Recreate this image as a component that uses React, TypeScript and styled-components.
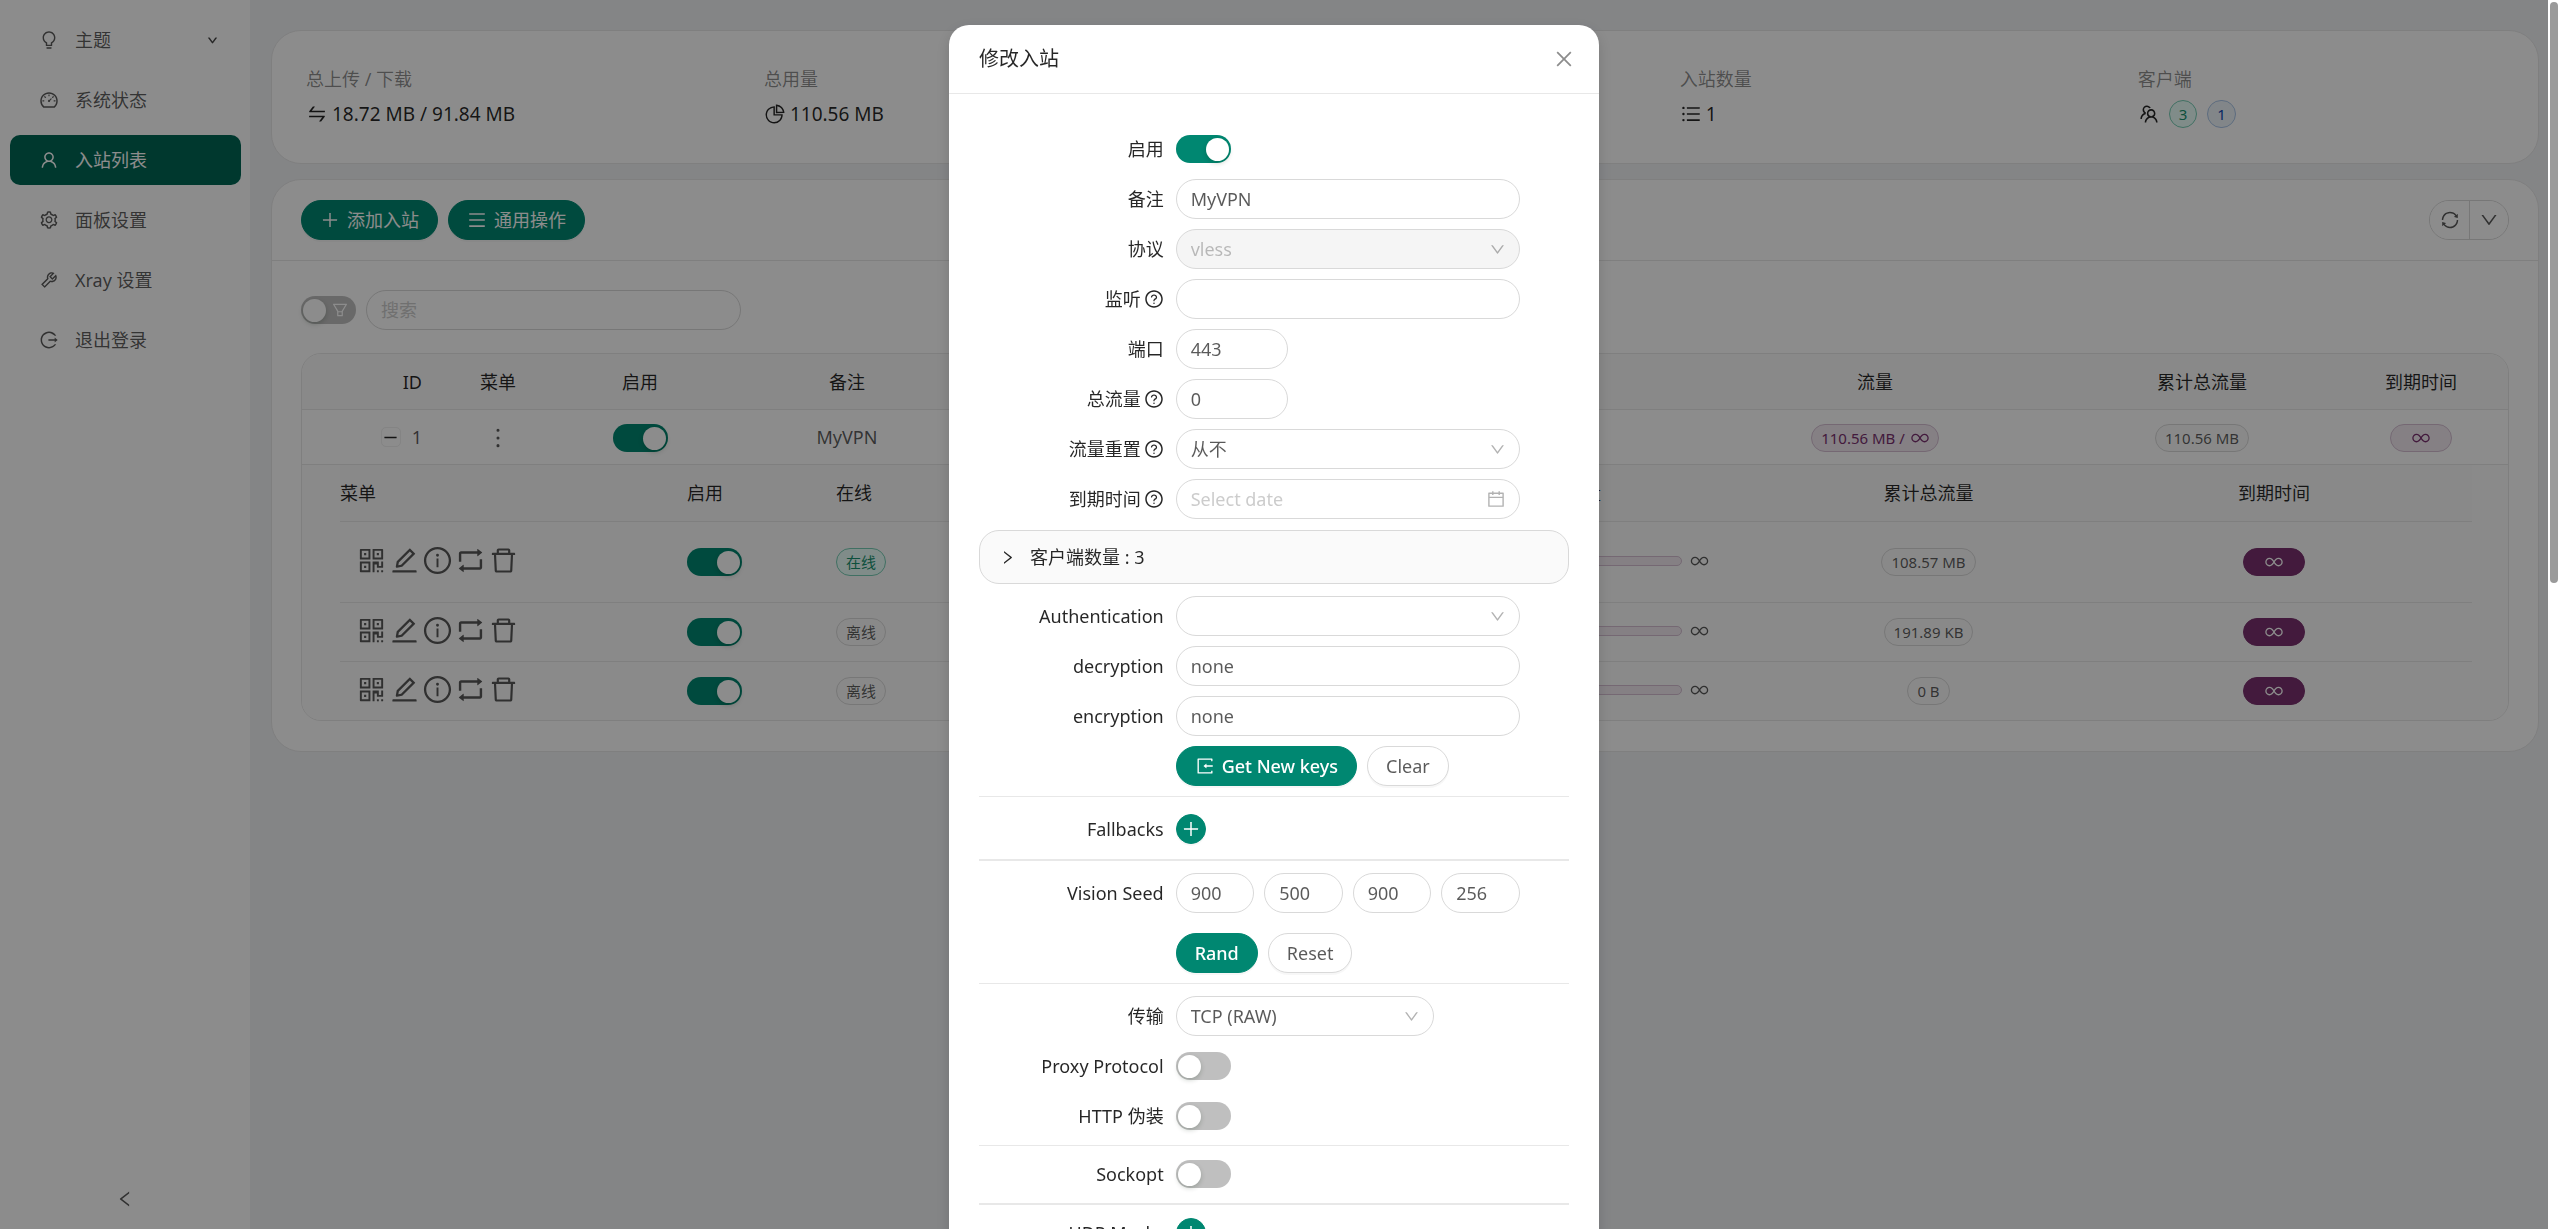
import React from "react";
import styled, { createGlobalStyle, css } from "styled-components";
import {
  AiOutlineBars,
  AiOutlineBulb,
  AiOutlineCalendar,
  AiOutlineClose,
  AiOutlineDashboard,
  AiOutlineDelete,
  AiOutlineDown,
  AiOutlineEdit,
  AiOutlineFilter,
  AiOutlineInfoCircle,
  AiOutlineLeft,
  AiOutlineLogout,
  AiOutlineMenu,
  AiOutlineMinus,
  AiOutlineMore,
  AiOutlinePieChart,
  AiOutlinePlus,
  AiOutlineQrcode,
  AiOutlineQuestionCircle,
  AiOutlineRetweet,
  AiOutlineRight,
  AiOutlineSetting,
  AiOutlineSwap,
  AiOutlineSync,
  AiOutlineTeam,
  AiOutlineTool,
  AiOutlineUser,
} from "react-icons/ai";

const color = {
  primary: "#008771",
  primaryDark: "#006655",
  heading: "rgba(0, 0, 0, 0.85)",
  text: "rgba(0, 0, 0, 0.65)",
  muted: "rgba(0, 0, 0, 0.45)",
  faint: "rgba(0, 0, 0, 0.25)",
  placeholder: "#cccccc",
  border: "#d9d9d9",
  line: "#e8e8e8",
  page: "#f0f2f5",
};

const GlobalStyle = createGlobalStyle`
  *, *::before, *::after { box-sizing: border-box; }
  body {
    margin: 0;
    background: ${color.page};
    color: ${color.text};
    font-family: "Noto Sans", "Noto Sans CJK SC", sans-serif;
    font-size: 18px;
    line-height: 28px;
    overflow: hidden;
  }
  button, input, select { font: inherit; color: inherit; margin: 0; }
  button { cursor: pointer; }
  svg { display: block; flex: none; }
`;

/* ---------- Page frame ---------- */

const Page = styled.div`
  display: flex;
  min-height: 100vh;
`;

const Sidebar = styled.aside`
  display: flex;
  flex-direction: column;
  justify-content: space-between;
  flex: 0 0 250px;
  background: #fff;
`;

const Menu = styled.ul`
  display: flex;
  flex-direction: column;
  gap: 10px;
  margin: 0;
  padding: 15px 9px 15px 10px;
  list-style: none;
`;

const MenuLink = styled.a<{ $active?: boolean }>`
  display: flex;
  align-items: center;
  gap: 16px;
  height: 50px;
  padding: 0 23px 0 29px;
  border-radius: 10px;
  color: ${(p) => (p.$active ? "#fff" : color.text)};
  background: ${(p) => (p.$active ? color.primaryDark : "transparent")};
  text-decoration: none;

  > span {
    flex: 1;
  }
`;

const CollapseButton = styled.button`
  display: flex;
  align-items: center;
  justify-content: center;
  height: 60px;
  border: 0;
  background: #fff;
`;

const Main = styled.main`
  flex: 1;
  min-width: 0;
  display: flex;
  flex-direction: column;
  gap: 15px;
  padding: 30px 21px;
`;

const Card = styled.section`
  border: 1px solid ${color.line};
  border-radius: 30px;
  background: #fff;
`;

/* ---------- Statistics ---------- */

const Stats = styled(Card)`
  display: grid;
  grid-template-columns: 5fr 5fr 5fr 5fr 4fr;
  padding: 34px;
`;

const Stat = styled.div`
  display: flex;
  flex-direction: column;
  gap: 6px;
`;

const StatTitle = styled.div`
  color: ${color.muted};
`;

const StatValue = styled.div`
  display: flex;
  align-items: center;
  gap: 4px;
  height: 30px;
  font-size: 19px;
  color: ${color.heading};
`;

const StatTags = styled.div`
  display: flex;
  gap: 10px;
  padding-left: 5px;
`;

/* ---------- Shared controls ---------- */

const Button = styled.button<{ $primary?: boolean }>`
  display: inline-flex;
  align-items: center;
  gap: 7px;
  height: 40px;
  padding: 0 18px;
  border: 1px solid ${(p) => (p.$primary ? color.primary : color.border)};
  border-radius: 20px;
  background: ${(p) => (p.$primary ? color.primary : "#fff")};
  color: ${(p) => (p.$primary ? "#fff" : color.text)};
  font-weight: ${(p) => (p.$primary ? 500 : 400)};
  box-shadow: 0 2px 0 rgba(0, 0, 0, 0.03);
`;

const AddButton = styled(Button)`
  justify-content: center;
  width: 30px;
  height: 30px;
  padding: 0;
`;

const SwitchInput = styled.input`
  appearance: none;
  display: inline-flex;
  align-items: center;
  width: 55px;
  height: 28px;
  padding: 0 2px;
  border-radius: 14px;
  background: rgba(0, 0, 0, 0.25);
  vertical-align: middle;

  &::before {
    content: "";
    width: 23px;
    height: 23px;
    border-radius: 50%;
    background: #fff;
    box-shadow: 0 2px 5px rgba(0, 35, 11, 0.2);
  }

  &:checked {
    justify-content: flex-end;
    background: ${color.primary};
  }
`;

type TagTone = "plain" | "green" | "blue" | "purple" | "solid";

const tones: Record<TagTone, [string, string, string]> = {
  plain: ["#fafafa", "#d9d9d9", color.text],
  green: ["#eafff9", "#76ccb4", "#199270"],
  blue: ["#edf4fa", "#a9c5e7", "#0e49b5"],
  purple: ["#f2eaf1", "#d5bed2", "#7a316f"],
  solid: ["#7a316f", "#7a316f", "#fff"],
};

const Tag = styled.span<{ $tone?: TagTone; $wide?: boolean }>`
  display: inline-flex;
  align-items: center;
  justify-content: center;
  gap: 6px;
  min-width: ${(p) => (p.$wide ? "62px" : "28px")};
  height: 28px;
  padding: 0 9px;
  border: 1px solid ${(p) => tones[p.$tone ?? "plain"][1]};
  border-radius: 14px;
  background: ${(p) => tones[p.$tone ?? "plain"][0]};
  color: ${(p) => tones[p.$tone ?? "plain"][2]};
  font-size: 15px;
  line-height: 20px;
  vertical-align: middle;
`;

const fieldStyle = css`
  width: 100%;
  height: 40px;
  padding: 0 14px;
  border: 1px solid ${color.border};
  border-radius: 20px;
  background: #fff;
  outline: 0;
`;

const TextInput = styled.input`
  ${fieldStyle}
  &::placeholder {
    color: ${color.placeholder};
  }
`;

/* ---------- Inbound list ---------- */

const ListCard = styled(Card)`
  display: flex;
  flex-direction: column;
`;

const Toolbar = styled.header`
  display: flex;
  align-items: center;
  gap: 10px;
  padding: 20px 29px;
  border-bottom: 1px solid ${color.line};

  ${Button} {
    font-weight: 400;
  }
`;

const RefreshGroup = styled.div`
  display: flex;
  height: 40px;
  margin-left: auto;
  border: 1px solid ${color.border};
  border-radius: 20px;
  overflow: hidden;

  button {
    display: flex;
    align-items: center;
    justify-content: center;
    width: 39px;
    padding: 0;
    border: 0;
    background: #fff;
  }

  button + button {
    border-left: 1px solid ${color.border};
  }
`;

const ListBody = styled.div`
  display: flex;
  flex-direction: column;
  gap: 23px;
  padding: 29px 29px 30px;
`;

const Filters = styled.div`
  display: flex;
  align-items: center;
  gap: 10px;
`;

const FilterSwitch = styled.label`
  position: relative;
  display: flex;

  svg {
    position: absolute;
    right: 7px;
    top: 5px;
    color: #fff;
  }
`;

const SearchBox = styled.div`
  width: 375px;
`;

const TableFrame = styled.div`
  border: 1px solid ${color.line};
  border-radius: 20px;
  overflow: hidden;
`;

const Table = styled.table`
  width: 100%;
  table-layout: fixed;
  border-collapse: separate;
  border-spacing: 0;
`;

const Col = styled.col<{ $w?: number }>`
  width: ${(p) => (p.$w ? `${p.$w}px` : "auto")};
`;

const Th = styled.th<{ $align?: string; $pad?: number; $nested?: boolean }>`
  height: ${(p) => (p.$nested ? 57 : 56)}px;
  padding: 0 ${(p) => p.$pad ?? 0}px 0 0;
  border-bottom: 1px solid ${color.line};
  background: #fafafa;
  color: ${color.heading};
  font-weight: 400;
  text-align: ${(p) => p.$align ?? "center"};
`;

const Td = styled.td<{ $align?: string; $pad?: number; $h?: number }>`
  height: ${(p) => p.$h ?? 55}px;
  padding: 0 ${(p) => p.$pad ?? 0}px ${(p) => (p.$h ? 2 : 0)}px 0;
  border-bottom: 1px solid ${color.line};
  text-align: ${(p) => p.$align ?? "center"};
`;

const ExpandedCell = styled.td`
  padding: 0 36px 0 38px;
  background: #fbfbfb;

  tbody tr:last-child td {
    border-bottom: 0;
  }
`;

const IdCell = styled.div`
  display: flex;
  align-items: center;
  justify-content: flex-end;
  gap: 11px;
`;

const ExpandButton = styled.button`
  display: flex;
  align-items: center;
  justify-content: center;
  width: 20px;
  height: 20px;
  padding: 0;
  border: 1px solid #f0f0f0;
  border-radius: 5px;
  background: #fff;
  color: ${color.heading};
`;

const IconButton = styled.button`
  display: inline-flex;
  padding: 0;
  border: 0;
  background: none;
  vertical-align: middle;
`;

const RowActions = styled.div`
  display: flex;
  gap: 2px;
  padding: 0 0 2px 16px;
`;

const Traffic = styled.div`
  display: flex;
  align-items: center;
  justify-content: flex-end;
  gap: 8px;
  padding-right: 72px;
`;

const TrafficBar = styled.div`
  width: 160px;
  height: 10px;
  border: 1px solid #d5bed2;
  border-radius: 5px;
  background: #f2eaf1;
`;

/* ---------- Modal ---------- */

const Overlay = styled.div`
  position: fixed;
  inset: 0;
  display: flex;
  overflow: hidden;
  background: rgba(0, 0, 0, 0.45);
`;

const ModalArea = styled.div`
  flex: 1;
  display: flex;
  align-items: flex-start;
  justify-content: center;
  padding-top: 25px;
`;

const ScrollTrack = styled.div`
  flex: 0 0 12px;
  padding: 2px;
  background: #fff;
`;

const ScrollThumb = styled.div`
  height: 47.4%;
  border-radius: 4px;
  background: #9a9a9a;
`;

const Modal = styled.div`
  width: 650px;
  border-radius: 20px;
  background: #fff;
  box-shadow: 0 5px 15px rgba(0, 0, 0, 0.15);
`;

const ModalHeader = styled.header`
  display: flex;
  align-items: center;
  justify-content: space-between;
  height: 69px;
  padding: 0 24px 0 30px;
  border-bottom: 1px solid ${color.line};
`;

const ModalTitle = styled.h2`
  margin: 0;
  color: ${color.heading};
  font-size: 20px;
  font-weight: 400;
`;

const CloseButton = styled(IconButton)`
  color: ${color.muted};
`;

const ModalBody = styled.form`
  padding: 30px;
`;

const Row = styled.div`
  display: grid;
  grid-template-columns: 8fr 14fr 2fr;
  align-items: center;
  height: 50px;
`;

const SpacedRow = styled(Row)`
  margin-top: 10px;
`;

const Label = styled.label`
  display: flex;
  align-items: center;
  justify-content: flex-end;
  gap: 3px;
  padding-right: 12px;
  color: ${color.heading};
  white-space: nowrap;
`;

const Control = styled.div`
  grid-column: 2;
  display: flex;
  align-items: center;
  gap: 10px;
`;

const SeedGrid = styled.div`
  grid-column: 2;
  display: grid;
  grid-template-columns: repeat(4, 1fr);
  gap: 10px;
`;

const NumberBox = styled.div`
  width: 112px;
`;

const FieldWrap = styled.div<{ $w?: number }>`
  position: relative;
  width: ${(p) => (p.$w ? `${p.$w}px` : "100%")};

  > svg {
    position: absolute;
    top: 0;
    bottom: 0;
    right: 14px;
    margin: auto 0;
    color: rgba(0, 0, 0, 0.3);
    pointer-events: none;
  }
`;

const SelectInput = styled.select`
  ${fieldStyle}
  appearance: none;

  &:disabled {
    background: #f5f5f5;
    color: ${color.faint};
    opacity: 1;
  }
`;

const Divider = styled.hr<{ $thick?: boolean; $tight?: boolean }>`
  height: ${(p) => (p.$thick ? 2 : 1)}px;
  margin: ${(p) => (p.$tight ? "4px 0 3px" : "5px 0 7px")};
  border: 0;
  background: ${color.line};
`;

const CollapsePanel = styled.button`
  display: flex;
  align-items: center;
  gap: 14px;
  width: 100%;
  height: 54px;
  margin: 6px 0 7px;
  padding: 0 19px;
  border: 1px solid ${color.border};
  border-radius: 20px;
  background: #fafafa;
  color: ${color.heading};
`;

/* ---------- Pieces ---------- */

const Infinity = ({ size = 18 }: { size?: number }) => (
  <svg width={size} height={Math.round(size * 0.75)} viewBox="0 0 640 512" fill="currentColor" aria-hidden="true">
    <path d="M484.4 96C407 96 349.2 164.1 320 208.5C290.8 164.1 233 96 155.6 96C69.75 96 0 167.8 0 256s69.75 160 155.6 160C233.1 416 290.8 347.9 320 303.5C349.2 347.9 407 416 484.4 416C570.3 416 640 344.2 640 256S570.3 96 484.4 96zM155.6 368C96.25 368 48 317.8 48 256s48.25-112 107.6-112c67.75 0 120.5 82.25 137.1 112C276 285.8 223.4 368 155.6 368zM484.4 368c-67.75 0-120.5-82.25-137.1-112C364 226.2 416.6 144 484.4 144C543.8 144 592 194.2 592 256S543.8 368 484.4 368z" />
  </svg>
);

const ImportIcon = () => (
  <svg width="20" height="20" viewBox="0 0 1024 1024" fill="currentColor" aria-hidden="true">
    <path d="M888.3 757.4h-53.8c-4.2 0-7.7 3.5-7.7 7.7v61.8H197.1V197.1h629.8v61.8c0 4.2 3.5 7.7 7.7 7.7h53.8c4.2 0 7.7-3.4 7.7-7.7V158.7c0-17-13.7-30.7-30.7-30.7H158.7c-17 0-30.7 13.7-30.7 30.7v706.6c0 17 13.7 30.7 30.7 30.7h706.6c17 0 30.7-13.7 30.7-30.7V765.1c0-4.3-3.5-7.7-7.7-7.7zM902 476H588v-76c0-6.7-7.8-10.5-13-6.3l-141.9 112a8 8 0 000 12.6l141.9 112c5.3 4.2 13 .4 13-6.3v-76h314c4.4 0 8-3.6 8-8v-56c0-4.4-3.6-8-8-8z" />
  </svg>
);

const Switch = (props: { id?: string; on?: boolean; name?: string }) => (
  <SwitchInput type="checkbox" role="switch" id={props.id} defaultChecked={props.on} aria-label={props.name} />
);

const Select = (props: { id: string; value: string; width?: number; disabled?: boolean }) => (
  <FieldWrap $w={props.width}>
    <SelectInput id={props.id} disabled={props.disabled} defaultValue={props.value}>
      <option value={props.value}>{props.value}</option>
    </SelectInput>
    <AiOutlineDown size={17} />
  </FieldWrap>
);

const Field = (props: { id: string; label: string; help?: boolean; children: React.ReactNode }) => (
  <Row>
    <Label htmlFor={props.id}>
      {props.label}
      {props.help && <AiOutlineQuestionCircle size={20} />}
    </Label>
    <Control>{props.children}</Control>
  </Row>
);

const menuItems = [
  { label: "主题", Icon: AiOutlineBulb, expandable: true },
  { label: "系统状态", Icon: AiOutlineDashboard },
  { label: "入站列表", Icon: AiOutlineUser, active: true },
  { label: "面板设置", Icon: AiOutlineSetting },
  { label: "Xray 设置", Icon: AiOutlineTool },
  { label: "退出登录", Icon: AiOutlineLogout },
];

const clients = [
  { online: true, total: "108.57 MB", height: 81 },
  { online: false, total: "191.89 KB", height: 59 },
  { online: false, total: "0 B", height: 58 },
];

const actions = [AiOutlineQrcode, AiOutlineEdit, AiOutlineInfoCircle, AiOutlineRetweet, AiOutlineDelete];

const ClientTable = () => (
  <Table>
    <colgroup>
      <Col $w={347} />
      <Col $w={149} />
      <Col $w={150} />
      <Col />
      <Col $w={396} />
      <Col $w={295} />
      <Col $w={396} />
    </colgroup>
    <thead>
      <tr>
        <Th $nested $align="left">菜单</Th>
        <Th $nested $align="left">启用</Th>
        <Th $nested $align="left">在线</Th>
        <Th $nested />
        <Th $nested>流量</Th>
        <Th $nested>累计总流量</Th>
        <Th $nested>到期时间</Th>
      </tr>
    </thead>
    <tbody>
      {clients.map((c) => (
        <tr key={c.total}>
          <Td $h={c.height} $align="left">
            <RowActions>
              {actions.map((Icon, i) => (
                <IconButton key={i} type="button">
                  <Icon size={31} />
                </IconButton>
              ))}
            </RowActions>
          </Td>
          <Td $h={c.height} $align="left">
            <Switch on name="启用" />
          </Td>
          <Td $h={c.height} $align="left">
            <Tag $tone={c.online ? "green" : "plain"}>{c.online ? "在线" : "离线"}</Tag>
          </Td>
          <Td $h={c.height} />
          <Td $h={c.height}>
            <Traffic>
              <TrafficBar />
              <Infinity size={19} />
            </Traffic>
          </Td>
          <Td $h={c.height}>
            <Tag>{c.total}</Tag>
          </Td>
          <Td $h={c.height}>
            <Tag $tone="solid" $wide>
              <Infinity />
            </Tag>
          </Td>
        </tr>
      ))}
    </tbody>
  </Table>
);

const InboundTable = () => (
  <TableFrame>
    <Table>
      <colgroup>
        <Col $w={140} />
        <Col $w={112} />
        <Col $w={172} />
        <Col $w={242} />
        <Col />
        <Col $w={390} />
        <Col $w={264} />
        <Col $w={174} />
      </colgroup>
      <thead>
        <tr>
          <Th $align="right" $pad={20}>ID</Th>
          <Th>菜单</Th>
          <Th>启用</Th>
          <Th>备注</Th>
          <Th />
          <Th>流量</Th>
          <Th>累计总流量</Th>
          <Th>到期时间</Th>
        </tr>
      </thead>
      <tbody>
        <tr>
          <Td $pad={20}>
            <IdCell>
              <ExpandButton type="button">
                <AiOutlineMinus size={17} />
              </ExpandButton>
              1
            </IdCell>
          </Td>
          <Td>
            <IconButton type="button">
              <AiOutlineMore size={28} />
            </IconButton>
          </Td>
          <Td>
            <Switch on name="启用" />
          </Td>
          <Td>MyVPN</Td>
          <Td />
          <Td>
            <Tag $tone="purple">
              110.56 MB / <Infinity />
            </Tag>
          </Td>
          <Td>
            <Tag>110.56 MB</Tag>
          </Td>
          <Td>
            <Tag $tone="purple" $wide>
              <Infinity />
            </Tag>
          </Td>
        </tr>
        <tr>
          <ExpandedCell colSpan={8}>
            <ClientTable />
          </ExpandedCell>
        </tr>
      </tbody>
    </Table>
  </TableFrame>
);

const EditInboundModal = () => (
  <Overlay>
    <ModalArea>
      <Modal role="dialog" aria-labelledby="modal-title">
        <ModalHeader>
          <ModalTitle id="modal-title">修改入站</ModalTitle>
          <CloseButton type="button">
            <AiOutlineClose size={22} />
          </CloseButton>
        </ModalHeader>
        <ModalBody>
          <Field id="enable" label="启用">
            <Switch id="enable" on />
          </Field>
          <Field id="remark" label="备注">
            <TextInput id="remark" defaultValue="MyVPN" />
          </Field>
          <Field id="protocol" label="协议">
            <Select id="protocol" value="vless" disabled />
          </Field>
          <Field id="listen" label="监听" help>
            <TextInput id="listen" />
          </Field>
          <Field id="port" label="端口">
            <NumberBox>
              <TextInput id="port" inputMode="numeric" defaultValue="443" />
            </NumberBox>
          </Field>
          <Field id="total" label="总流量" help>
            <NumberBox>
              <TextInput id="total" inputMode="numeric" defaultValue="0" />
            </NumberBox>
          </Field>
          <Field id="reset" label="流量重置" help>
            <Select id="reset" value="从不" />
          </Field>
          <Field id="expiry" label="到期时间" help>
            <FieldWrap>
              <TextInput id="expiry" placeholder="Select date" />
              <AiOutlineCalendar size={20} />
            </FieldWrap>
          </Field>

          <CollapsePanel type="button">
            <AiOutlineRight size={17} />
            客户端数量 : 3
          </CollapsePanel>

          <Field id="auth" label="Authentication">
            <Select id="auth" value="" />
          </Field>
          <Field id="decryption" label="decryption">
            <TextInput id="decryption" defaultValue="none" />
          </Field>
          <Field id="encryption" label="encryption">
            <TextInput id="encryption" defaultValue="none" />
          </Field>
          <Row>
            <Control>
              <Button type="button" $primary>
                <ImportIcon />
                Get New keys
              </Button>
              <Button type="button">Clear</Button>
            </Control>
          </Row>
          <Divider />
          <Field id="fallbacks" label="Fallbacks">
            <AddButton id="fallbacks" type="button" $primary>
              <AiOutlinePlus size={20} />
            </AddButton>
          </Field>
          <Divider $thick />
          <Row>
            <Label htmlFor="seed-0">Vision Seed</Label>
            <SeedGrid>
              {["900", "500", "900", "256"].map((seed, i) => (
                <TextInput key={i} id={`seed-${i}`} inputMode="numeric" defaultValue={seed} />
              ))}
            </SeedGrid>
          </Row>
          <SpacedRow>
            <Control>
              <Button type="button" $primary>
                Rand
              </Button>
              <Button type="button">Reset</Button>
            </Control>
          </SpacedRow>
          <Divider />
          <Field id="transport" label="传输">
            <Select id="transport" value="TCP (RAW)" width={258} />
          </Field>
          <Field id="proxy" label="Proxy Protocol">
            <Switch id="proxy" />
          </Field>
          <Field id="http" label="HTTP 伪装">
            <Switch id="http" />
          </Field>
          <Divider $tight />
          <Field id="sockopt" label="Sockopt">
            <Switch id="sockopt" />
          </Field>
          <Divider $thick $tight />
          <Field id="udp" label="UDP Masks">
            <AddButton id="udp" type="button" $primary>
              <AiOutlinePlus size={20} />
            </AddButton>
          </Field>
        </ModalBody>
      </Modal>
    </ModalArea>
    <ScrollTrack>
      <ScrollThumb />
    </ScrollTrack>
  </Overlay>
);

export default function App() {
  return (
    <>
      <GlobalStyle />
      <Page>
        <Sidebar>
          <nav>
            <Menu>
              {menuItems.map(({ label, Icon, active, expandable }) => (
                <li key={label}>
                  <MenuLink href="#" $active={active}>
                    <Icon size={20} />
                    <span>{label}</span>
                    {expandable && <AiOutlineDown size={11} strokeWidth={60} stroke="currentColor" />}
                  </MenuLink>
                </li>
              ))}
            </Menu>
          </nav>
          <CollapseButton type="button">
            <AiOutlineLeft size={20} />
          </CollapseButton>
        </Sidebar>

        <Main>
          <Stats>
            <Stat>
              <StatTitle>总上传 / 下载</StatTitle>
              <StatValue>
                <AiOutlineSwap size={22} />
                18.72 MB / 91.84 MB
              </StatValue>
            </Stat>
            <Stat>
              <StatTitle>总用量</StatTitle>
              <StatValue>
                <AiOutlinePieChart size={22} />
                110.56 MB
              </StatValue>
            </Stat>
            <Stat />
            <Stat>
              <StatTitle>入站数量</StatTitle>
              <StatValue>
                <AiOutlineBars size={22} />1
              </StatValue>
            </Stat>
            <Stat>
              <StatTitle>客户端</StatTitle>
              <StatValue>
                <AiOutlineTeam size={22} />
                <StatTags>
                  <Tag $tone="green">3</Tag>
                  <Tag $tone="blue">1</Tag>
                </StatTags>
              </StatValue>
            </Stat>
          </Stats>

          <ListCard>
            <Toolbar>
              <Button type="button" $primary>
                <AiOutlinePlus size={20} />
                添加入站
              </Button>
              <Button type="button" $primary>
                <AiOutlineMenu size={20} />
                通用操作
              </Button>
              <RefreshGroup>
                <button type="button">
                  <AiOutlineSync size={20} />
                </button>
                <button type="button">
                  <AiOutlineDown size={20} />
                </button>
              </RefreshGroup>
            </Toolbar>
            <ListBody>
              <Filters>
                <FilterSwitch>
                  <Switch name="筛选" />
                  <AiOutlineFilter size={18} />
                </FilterSwitch>
                <SearchBox>
                  <TextInput placeholder="搜索" aria-label="搜索" />
                </SearchBox>
              </Filters>
              <InboundTable />
            </ListBody>
          </ListCard>
        </Main>
      </Page>
      <EditInboundModal />
    </>
  );
}
